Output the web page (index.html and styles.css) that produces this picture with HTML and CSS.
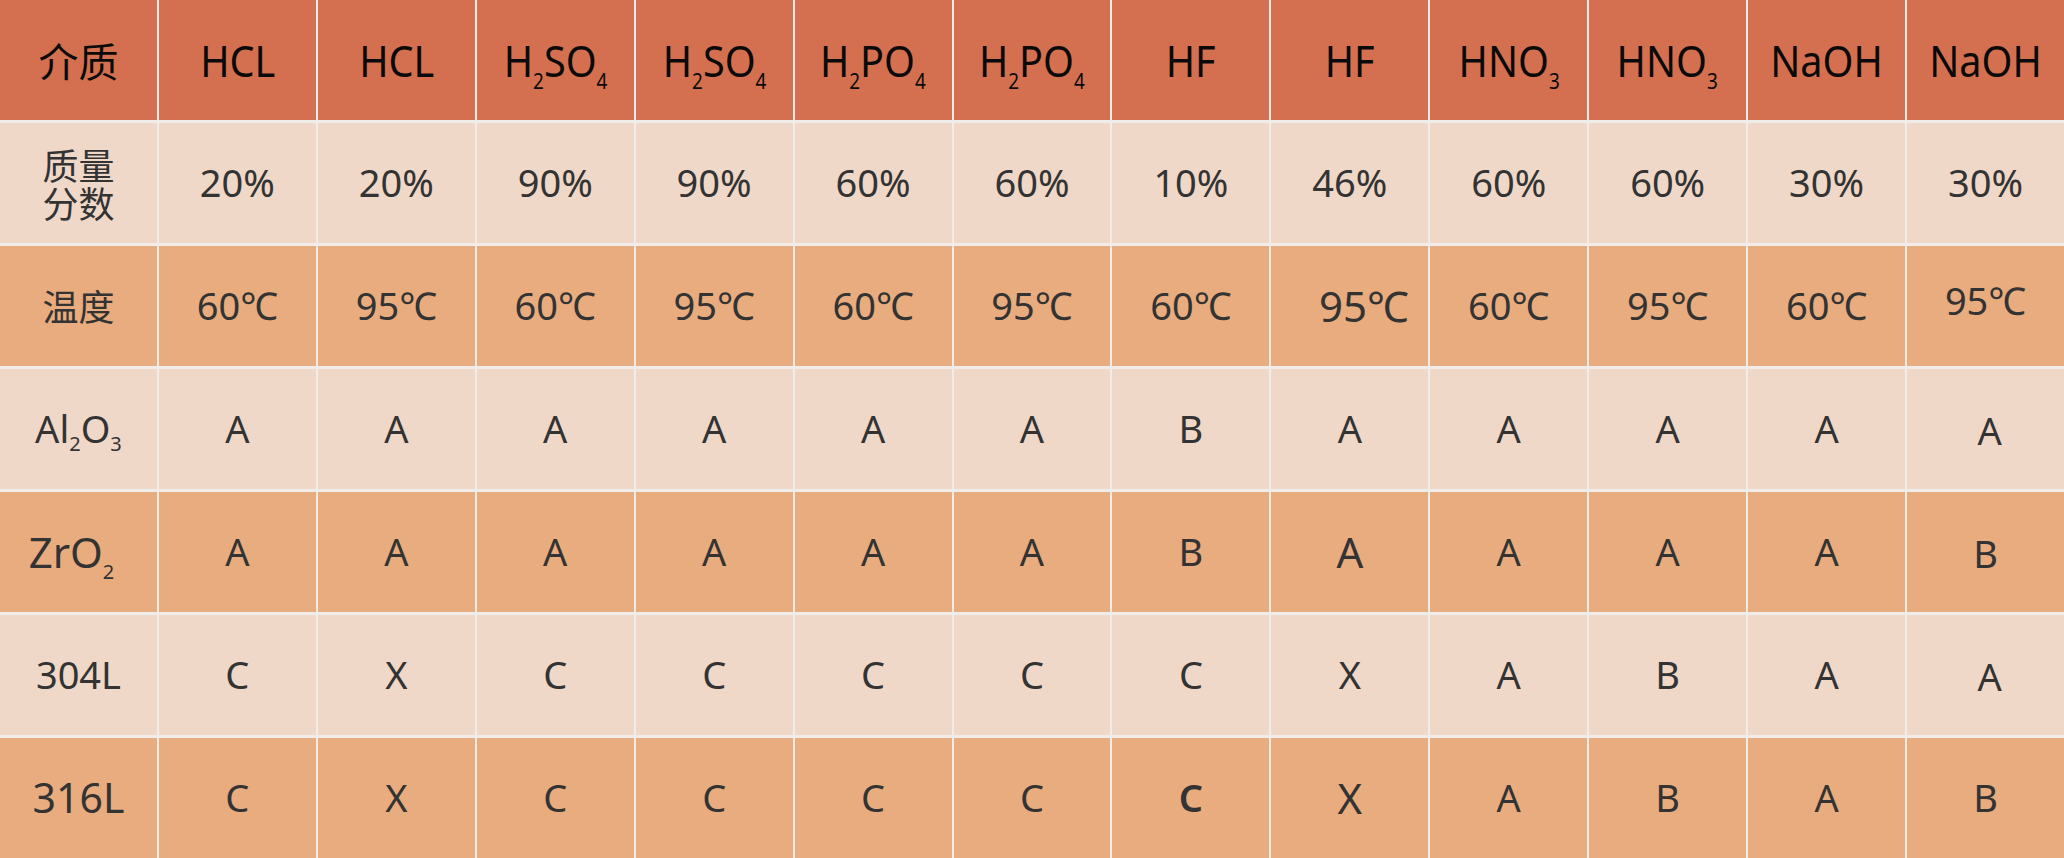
FILE: index.html
```html
<!DOCTYPE html>
<html lang="zh-CN">
<head>
<meta charset="utf-8">
<title>耐腐蚀性能对照表</title>
<link rel="stylesheet" href="styles.css">
</head>
<body>
<div class="grid">
  <div class="row head">
    <div class="cell"><span class="cn-big">介质</span></div>
    <div class="cell"><span class="hd">HCL</span></div>
    <div class="cell"><span class="hd">HCL</span></div>
    <div class="cell"><span class="hd">H<sub>2</sub>SO<sub>4</sub></span></div>
    <div class="cell"><span class="hd">H<sub>2</sub>SO<sub>4</sub></span></div>
    <div class="cell"><span class="hd">H<sub>2</sub>PO<sub>4</sub></span></div>
    <div class="cell"><span class="hd">H<sub>2</sub>PO<sub>4</sub></span></div>
    <div class="cell"><span class="hd">HF</span></div>
    <div class="cell"><span class="hd">HF</span></div>
    <div class="cell"><span class="hd">HNO<sub>3</sub></span></div>
    <div class="cell"><span class="hd">HNO<sub>3</sub></span></div>
    <div class="cell"><span class="hd">NaOH</span></div>
    <div class="cell"><span class="hd">NaOH</span></div>
  </div>
  <div class="row light">
    <div class="cell"><span class="cn two">质量<br>分数</span></div>
    <div class="cell">20%</div>
    <div class="cell">20%</div>
    <div class="cell">90%</div>
    <div class="cell">90%</div>
    <div class="cell">60%</div>
    <div class="cell">60%</div>
    <div class="cell">10%</div>
    <div class="cell">46%</div>
    <div class="cell">60%</div>
    <div class="cell">60%</div>
    <div class="cell">30%</div>
    <div class="cell">30%</div>
  </div>
  <div class="row dark">
    <div class="cell"><span class="cn">温度</span></div>
    <div class="cell">60℃</div>
    <div class="cell">95℃</div>
    <div class="cell">60℃</div>
    <div class="cell">95℃</div>
    <div class="cell">60℃</div>
    <div class="cell">95℃</div>
    <div class="cell">60℃</div>
    <div class="cell big shift-r">95℃</div>
    <div class="cell">60℃</div>
    <div class="cell">95℃</div>
    <div class="cell">60℃</div>
    <div class="cell up">95℃</div>
  </div>
  <div class="row light">
    <div class="cell"><span class="al">Al<sub>2</sub>O<sub>3</sub></span></div>
    <div class="cell">A</div>
    <div class="cell">A</div>
    <div class="cell">A</div>
    <div class="cell">A</div>
    <div class="cell">A</div>
    <div class="cell">A</div>
    <div class="cell">B</div>
    <div class="cell">A</div>
    <div class="cell">A</div>
    <div class="cell">A</div>
    <div class="cell">A</div>
    <div class="cell down nudge-r">A</div>
  </div>
  <div class="row dark">
    <div class="cell shift-l"><span class="zr">ZrO<sub>2</sub></span></div>
    <div class="cell">A</div>
    <div class="cell">A</div>
    <div class="cell">A</div>
    <div class="cell">A</div>
    <div class="cell">A</div>
    <div class="cell">A</div>
    <div class="cell">B</div>
    <div class="cell big">A</div>
    <div class="cell">A</div>
    <div class="cell">A</div>
    <div class="cell">A</div>
    <div class="cell down">B</div>
  </div>
  <div class="row light">
    <div class="cell">304L</div>
    <div class="cell">C</div>
    <div class="cell">X</div>
    <div class="cell">C</div>
    <div class="cell">C</div>
    <div class="cell">C</div>
    <div class="cell">C</div>
    <div class="cell">C</div>
    <div class="cell">X</div>
    <div class="cell">A</div>
    <div class="cell">B</div>
    <div class="cell">A</div>
    <div class="cell down nudge-r">A</div>
  </div>
  <div class="row dark">
    <div class="cell label-lg">316L</div>
    <div class="cell">C</div>
    <div class="cell">X</div>
    <div class="cell">C</div>
    <div class="cell">C</div>
    <div class="cell">C</div>
    <div class="cell">C</div>
    <div class="cell bold">C</div>
    <div class="cell big">X</div>
    <div class="cell">A</div>
    <div class="cell">B</div>
    <div class="cell">A</div>
    <div class="cell">B</div>
  </div>
</div>
</body>
</html>
```

FILE: styles.css
```css
html, body {
  margin: 0;
  padding: 0;
  background: #efece9;
}

body {
  width: 2064px;
  height: 858px;
  overflow: hidden;
  font-family: "Noto Sans", "Noto Sans CJK SC", sans-serif;
  color: #333333;
}

.grid {
  display: grid;
  grid-template-columns: repeat(13, 1fr);
  grid-auto-rows: 120px;
  column-gap: 2px;
  row-gap: 3px;
  width: 2064px;
  height: 858px;
  background: #efece9;
}

.row {
  display: contents;
}

.cell {
  display: flex;
  align-items: center;
  justify-content: center;
  font-size: 38px;
  line-height: 1.2;
  white-space: nowrap;
}

.head .cell {
  background: #d4704f;
  color: #0a0a0a;
}

.light .cell {
  background: #efd8c8;
}

.dark .cell {
  background: #e8ac7e;
}

sub {
  font-size: 21px;
  line-height: 0;
  vertical-align: -12px;
}

.hd {
  display: inline-block;
  font-size: 44px;
  transform: scaleX(0.9);
}

.cn-big {
  font-family: "Noto Sans CJK SC", sans-serif;
  font-size: 40px;
}

.cn {
  font-family: "Noto Sans CJK SC", sans-serif;
  font-size: 36px;
}

.cn.two {
  line-height: 38px;
  text-align: center;
}

.al {
  font-size: 38px;
}

.al sub {
  font-size: 20px;
  vertical-align: -8px;
}

.zr {
  font-size: 42px;
}

.zr sub {
  font-size: 20px;
  vertical-align: -11px;
}

.label-lg {
  font-size: 41px;
}

.big {
  font-size: 42px;
}

.bold {
  font-weight: 600;
}

.shift-r {
  padding-left: 28px;
}

.shift-l {
  padding-right: 14px;
}

.up {
  padding-bottom: 10px;
}

.down {
  padding-top: 4px;
}

.nudge-r {
  padding-left: 8px;
}
```
